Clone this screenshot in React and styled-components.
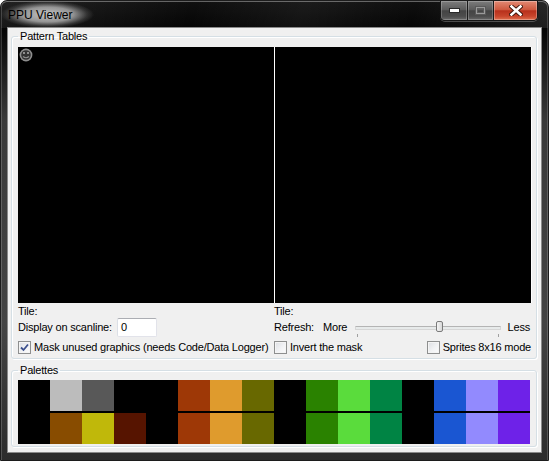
import React from "react";
import styled, { createGlobalStyle } from "styled-components";

const TOP_ROW = [
	"#000", "#bcbcbc", "#585858", "#000",
	"#000", "#9e3806", "#df9b2d", "#686800",
	"#000", "#2a8200", "#5adc3c", "#008444",
	"#000", "#1a56d2", "#928afe", "#6e22e8",
];
const BOTTOM_ROW = [
	"#000", "#884c00", "#c0b80a", "#561400",
	"#000", "#9e3806", "#df9b2d", "#686800",
	"#000", "#2a8200", "#5adc3c", "#008444",
	"#000", "#1a56d2", "#928afe", "#6e22e8",
];

function CheckBox({ checked }) {
	return (
		<BoxC>
			{checked && (
				<svg width="9" height="9" viewBox="0 0 9 9">
					<path d="M1 4.5 L3.5 7 L8 1.5" fill="none" stroke="#3b4f8c" strokeWidth="1.8" />
				</svg>
			)}
		</BoxC>
	);
}

function Slider({ value }) {
	// value 0..1 along the channel
	return (
		<SliderC>
			<TrackC>
				<ThumbC style={{ left: `calc(${value * 100}% - 3px)` }} />
			</TrackC>
			<TickC side="left" />
			<TickC side="right" />
		</SliderC>
	);
}

function App() {
	return (
		<>
			<GlobalStyle />
			<WindowC>
				<TitleBarC>
					<TitleC>PPU Viewer</TitleC>
					<CaptionC>
						<CapButtonC w={27}>
							<svg width="11" height="5" viewBox="0 0 11 5">
								<rect x="0.5" y="0.5" width="10" height="4" fill="#fff" stroke="#2a2a2a" />
							</svg>
						</CapButtonC>
						<CapButtonC w={26}>
							<svg width="11" height="9" viewBox="0 0 11 9">
								<rect x="0.5" y="0.5" width="10" height="8" fill="none" stroke="#5a5a5a" />
								<rect x="1.5" y="1.5" width="8" height="6" fill="none" stroke="#9a9a9a" />
								<rect x="2.5" y="3.5" width="6" height="3" fill="none" stroke="#5a5a5a" />
							</svg>
						</CapButtonC>
						<CapButtonC w={44} close>
							<svg width="14" height="11" viewBox="0 0 14 11">
								<path d="M2.5 1.5 L11.5 9.5 M11.5 1.5 L2.5 9.5" stroke="#3a1208" strokeWidth="4.4" strokeLinecap="square" />
								<path d="M2.5 1.5 L11.5 9.5 M11.5 1.5 L2.5 9.5" stroke="#fff" strokeWidth="2.6" strokeLinecap="square" />
							</svg>
						</CapButtonC>
					</CaptionC>
				</TitleBarC>
				<ClientC>
					<GroupC>
						<LegendC>Pattern Tables</LegendC>
						<TablesC>
							<TableC>
								<svg width="14" height="14" viewBox="0 0 14 14">
									<circle cx="7" cy="7" r="6.4" fill="#8e8e8e" />
									<circle cx="7" cy="7" r="4.8" fill="#333" />
									<rect x="4" y="4" width="2" height="2" fill="#8e8e8e" />
									<rect x="8" y="4" width="2" height="2" fill="#8e8e8e" />
									<path d="M4 8.5 Q7 11 10 8.5" fill="none" stroke="#8e8e8e" strokeWidth="1.2" />
								</svg>
							</TableC>
							<TableC />
						</TablesC>
						<InfoC>
							<TextC>Tile:</TextC>
							<TextC>Tile:</TextC>
							<RowC>
								<TextC w={99}>Display on scanline:</TextC>
								<InputC>0</InputC>
							</RowC>
							<RefreshC>
								<TextC>Refresh:</TextC>
								<TextC>More</TextC>
								<Slider value={0.58} />
								<TextC>Less</TextC>
							</RefreshC>
							<CheckRowC>
								<CheckLabelC>
									<CheckBox checked />
									<TextC>Mask unused graphics (needs Code/Data Logger)</TextC>
								</CheckLabelC>
							</CheckRowC>
							<CheckRowC split>
								<CheckLabelC>
									<CheckBox />
									<TextC>Invert the mask</TextC>
								</CheckLabelC>
								<CheckLabelC>
									<CheckBox />
									<TextC>Sprites 8x16 mode</TextC>
								</CheckLabelC>
							</CheckRowC>
						</InfoC>
					</GroupC>
					<GroupC palettes>
						<LegendC>Palettes</LegendC>
						<PaletteC>
							{TOP_ROW.map((c, i) => (
								<SwatchC key={"t" + i} color={c} />
							))}
							{BOTTOM_ROW.map((c, i) => (
								<SwatchC key={"b" + i} color={c} />
							))}
						</PaletteC>
					</GroupC>
				</ClientC>
			</WindowC>
		</>
	);
}

const GlobalStyle = createGlobalStyle`
	html, body {
		margin: 0;
		padding: 0;
		background: #ffffff;
	}
	body {
		font-family: "Liberation Sans", Arial, sans-serif;
		font-size: 11px;
		letter-spacing: -0.2px;
		color: #000;
	}
`;

// Window frame
const WindowC = styled.div`
	box-sizing: border-box;
	width: 549px;
	height: 461px;
	display: flex;
	flex-direction: column;
	border: 1px solid #1c1c1c;
	border-radius: 7px 7px 0 0;
	overflow: hidden;
	background: linear-gradient(180deg, #101010 0px, #050505 27px, #3a3a3a 120px, #444 70%, #2c2c2c 100%);
	box-shadow: inset 0 1px 0 rgba(255, 255, 255, 0.35), inset 1px 0 0 rgba(255, 255, 255, 0.18),
		inset -1px 0 0 rgba(255, 255, 255, 0.18);
`;

const TitleBarC = styled.div`
	height: 27px;
	flex: none;
	display: flex;
	justify-content: space-between;
	align-items: flex-start;
	background: linear-gradient(105deg, rgba(255, 255, 255, 0.08) 0%, rgba(255, 255, 255, 0) 35%,
		rgba(255, 255, 255, 0.05) 55%, rgba(255, 255, 255, 0) 75%, rgba(255, 255, 255, 0.1) 100%);
`;

const TitleC = styled.div`
	margin-top: 0;
	padding: 7px 22px 5px 7px;
	font-size: 12px;
	line-height: 15px;
	letter-spacing: 0;
	color: #000;
	background: radial-gradient(closest-side, rgba(215, 215, 215, 0.9) 0%, rgba(190, 190, 190, 0.75) 55%,
		rgba(120, 120, 120, 0.3) 85%, rgba(0, 0, 0, 0) 100%);
`;

const CaptionC = styled.div`
	display: flex;
	height: 19px;
	margin-right: 10px;
	border: 1px solid #161616;
	border-top: none;
	border-radius: 0 0 5px 5px;
	overflow: hidden;
	box-shadow: 0 1px 0 rgba(255, 255, 255, 0.25);
`;

const CapButtonC = styled.div`
	width: ${(p) => p.w - 1}px;
	display: flex;
	align-items: center;
	justify-content: center;
	& + & {
		border-left: 1px solid #1a1a1a;
	}
	box-shadow: inset 0 0 0 1px rgba(255, 255, 255, ${(p) => (p.close ? 0.3 : 0.22)});
	background: ${(p) =>
		p.close
			? "linear-gradient(180deg, #e28a74 0%, #cf5a40 45%, #b8301c 52%, #c8452c 80%, #e07050 100%)"
			: "linear-gradient(180deg, #7d7d7d 0%, #5c5c5c 45%, #444 52%, #4c4c4c 80%, #6a6a6a 100%)"};
`;

const ClientC = styled.div`
	flex: 1;
	margin: 0 7px 8px 7px;
	padding: 2px 4px 0 3px;
	background: #f0f0f0;
	box-shadow: 0 0 0 1px #8a8a8a;
	display: flex;
	flex-direction: column;
`;

// Group boxes
const GroupC = styled.fieldset`
	margin: ${(p) => (p.palettes ? "5px" : "0")} 0 0 0;
	padding: ${(p) => (p.palettes ? "3px 5px 2px 6px" : "4px 4px 4px 6px")};
	min-inline-size: 0;
	border: 1px solid #d5dfe5;
	border-radius: 3px;
	box-shadow: inset 1px 1px 0 #fff, 1px 1px 0 #fff;
`;

const LegendC = styled.legend`
	padding: 0 2px;
	line-height: 13px;
	font-size: 11px;
`;

const TablesC = styled.div`
	display: flex;
	gap: 1px;
	background: #fff;
`;

const TableC = styled.div`
	width: 256px;
	height: 256px;
	background: #000;
	box-sizing: border-box;
	padding: 1px 0 0 1px;
	& svg {
		display: block;
	}
`;

const InfoC = styled.div`
	display: grid;
	grid-template-columns: 256px 257px;
	margin-top: 2px;
`;

const TextC = styled.span`
	display: inline-block;
	line-height: 13px;
	white-space: nowrap;
	${(p) => (p.w ? `width: ${p.w}px;` : "")}
`;

const RowC = styled.div`
	display: flex;
	align-items: center;
	height: 19px;
`;

const InputC = styled.div`
	box-sizing: border-box;
	width: 40px;
	height: 19px;
	padding: 2px 0 0 3px;
	line-height: 13px;
	background: #fff;
	border: 1px solid #e2e3ea;
	border-top-color: #abadb3;
	border-left-color: #dbdfe6;
	border-radius: 2px;
`;

const RefreshC = styled.div`
	display: grid;
	grid-template-columns: 49px 29px 1fr auto;
	align-items: center;
	height: 19px;
	padding-right: 1px;
`;

const SliderC = styled.div`
	position: relative;
	height: 19px;
	padding: 0 7px 0 3px;
`;

const TrackC = styled.div`
	position: relative;
	margin-top: 8px;
	height: 2px;
	background: #e7eaea;
	border: 1px solid #d6d6d6;
	border-top-color: #b4b4b4;
	border-radius: 1px;
`;

const ThumbC = styled.div`
	position: absolute;
	top: -6px;
	width: 5px;
	height: 9px;
	border: 1px solid #7a7a7a;
	border-radius: 2px;
	background: linear-gradient(90deg, #f4f4f4, #d8d8d8);
`;

const TickC = styled.div`
	position: absolute;
	top: 16px;
	${(p) => (p.side === "left" ? "left: 5px;" : "right: 9px;")}
	width: 1px;
	height: 3px;
	background: #a0a0a0;
`;

const CheckRowC = styled.div`
	display: flex;
	align-items: center;
	justify-content: ${(p) => (p.split ? "space-between" : "flex-start")};
	margin-top: 4px;
	height: 13px;
`;

const CheckLabelC = styled.label`
	display: flex;
	align-items: center;
	gap: 3px;
`;

const BoxC = styled.span`
	box-sizing: border-box;
	width: 13px;
	height: 13px;
	display: flex;
	align-items: center;
	justify-content: center;
	border: 1px solid #8e8f8f;
	background: linear-gradient(135deg, #dcdee2 0%, #f1f2f4 55%, #fcfcfc 100%);
	box-shadow: inset 0 0 0 1px #f4f4f4;
`;

// Palette strip
const PaletteC = styled.div`
	display: grid;
	grid-template-columns: repeat(16, 32px);
	grid-template-rows: 31px 31px;
	row-gap: 2px;
	background: #000;
	width: 512px;
`;

const SwatchC = styled.div`
	background: ${(p) => p.color};
`;

export default App;
